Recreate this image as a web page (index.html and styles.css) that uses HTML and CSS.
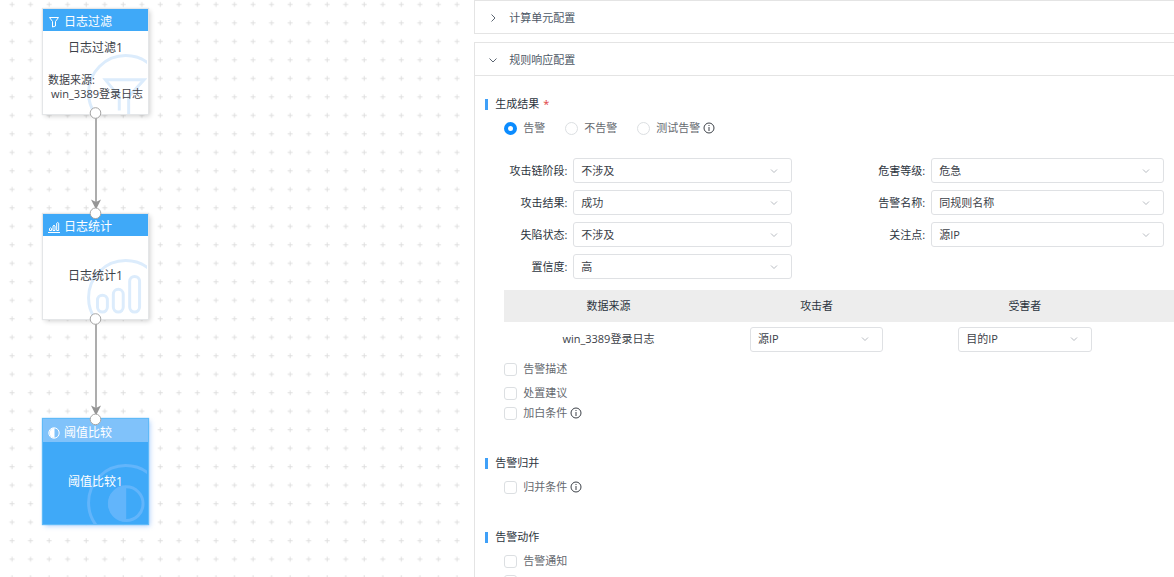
FILE: index.html
```html
<!DOCTYPE html>
<html lang="zh-CN">
<head>
  <meta charset="UTF-8" />
  <meta name="viewport" content="width=device-width, initial-scale=1.0" />
  <title>规则响应配置</title>
  <link rel="stylesheet" href="styles.css">
</head>
<body>
  <!-- 流程画布 -->
  <div class="canvas">
    <svg class="canvas-grid" aria-hidden="true">
      <defs>
        <pattern id="cross" x="3" y="-5" width="18.54" height="18.49" patternUnits="userSpaceOnUse">
          <path d="M9 7v5M6.500 9.500h5" stroke="#dedede" stroke-width="1" />
        </pattern>
      </defs>
      <rect width="462" height="100%" fill="url(#cross)" />
    </svg>

    <div class="node node-filter">
      <svg class="node-mark" viewBox="0 0 105 105" aria-hidden="true">
        <circle cx="83.5" cy="84" r="37.5" />
        <path d="M77 102V88L63 71h39L86.500 88v18" />
      </svg>
      <div class="node-head">
        <svg class="node-icon" viewBox="0 0 12 12" aria-hidden="true"><path d="M1.500 1.500h9L7.500 5.500v4.500l-3 1V5.500z" /></svg>
        <span>日志过滤</span>
      </div>
      <div class="node-title">日志过滤1</div>
      <div class="node-source">数据来源:<br><span>win_3389登录日志</span></div>
    </div>

    <div class="node node-stat">
      <svg class="node-mark" viewBox="0 0 105 105" aria-hidden="true">
        <circle cx="83.5" cy="84" r="37.5" />
        <rect x="55" y="81.500" width="10" height="17" rx="5" />
        <rect x="71" y="75.500" width="10" height="23" rx="5" />
        <rect x="87.500" y="62.500" width="10" height="36" rx="5" />
      </svg>
      <div class="node-head">
        <svg class="node-icon" viewBox="0 0 12 12" aria-hidden="true"><path d="M0 11.500h12M1.500 9.500V7.500q1-1.500 2 0v2zM5 9.500V5q1-1.500 2 0v4.500zM8.700 9.500V2.200q1-1.500 2 0v7.300z" /></svg>
        <span>日志统计</span>
      </div>
      <div class="node-title">日志统计1</div>
    </div>

    <div class="node node-compare">
      <svg class="node-mark" viewBox="0 0 105 105" aria-hidden="true">
        <circle cx="83.5" cy="84" r="37.5" />
        <circle cx="84" cy="85" r="17" />
        <path class="half" d="M84 67a18 18 0 0 0 0 36z" />
      </svg>
      <div class="node-head">
        <svg class="node-icon" viewBox="0 0 12 12" aria-hidden="true"><circle cx="6" cy="6" r="5.200" /><path class="half" d="M6.500 1a5 5 0 0 0 0 10z" /></svg>
        <span>阈值比较</span>
      </div>
      <div class="node-title">阈值比较1</div>
    </div>

    <svg class="links" width="160" height="440" aria-hidden="true">
      <path class="line" d="M96 113v90M96 319v90" />
      <path class="arrow" d="M91 199.500l5 2.500 5-2.500-5 10zM91 405.500l5 2.500 5-2.500-5 10z" />
      <circle cx="95.500" cy="113" r="5.300" />
      <circle cx="95.500" cy="213.300" r="5.300" />
      <circle cx="95.500" cy="319" r="5.300" />
      <circle cx="95.500" cy="419.400" r="5.300" />
    </svg>
  </div>

  <!-- 配置面板 -->
  <main class="config">
    <section class="panel">
      <button type="button" class="panel-head" aria-expanded="false">
        <svg viewBox="0 0 10 10" aria-hidden="true"><path d="M3.500 1.500L7 5 3.500 8.500" /></svg>
        计算单元配置
      </button>
    </section>

    <section class="panel panel-open">
      <button type="button" class="panel-head" aria-expanded="true">
        <svg viewBox="0 0 10 10" aria-hidden="true"><path d="M1.500 3.500L5 7l3.500-3.500" /></svg>
        规则响应配置
      </button>

      <div class="panel-body">
        <h2 class="section-title">生成结果<span class="required">*</span></h2>
        <div class="radios">
          <label><input type="radio" name="result" checked>告警</label>
          <label><input type="radio" name="result">不告警</label>
          <label><input type="radio" name="result">测试告警</label>
          <svg class="info" viewBox="0 0 12 12" aria-hidden="true"><circle cx="6" cy="6" r="5" /><path d="M6 5v4M6 3v1" /></svg>
        </div>

        <div class="form">
          <label for="stage">攻击链阶段:</label>
          <select id="stage"><option>不涉及</option></select>
          <label for="level">危害等级:</label>
          <select id="level"><option>危急</option></select>

          <label for="outcome">攻击结果:</label>
          <select id="outcome"><option>成功</option></select>
          <label for="name">告警名称:</label>
          <select id="name"><option>同规则名称</option></select>

          <label for="state">失陷状态:</label>
          <select id="state"><option>不涉及</option></select>
          <label for="focus">关注点:</label>
          <select id="focus"><option>源IP</option></select>

          <label for="trust">置信度:</label>
          <select id="trust"><option>高</option></select>
        </div>

        <table class="sources">
          <thead>
            <tr><th>数据来源</th><th>攻击者</th><th>受害者</th><th class="rest"></th></tr>
          </thead>
          <tbody>
            <tr>
              <td>win_3389登录日志</td>
              <td><select aria-label="攻击者"><option>源IP</option></select></td>
              <td><select aria-label="受害者"><option>目的IP</option></select></td>
              <td></td>
            </tr>
          </tbody>
        </table>

        <div class="checks">
          <label class="spaced"><input type="checkbox">告警描述</label>
          <label><input type="checkbox">处置建议</label>
          <div class="check-row">
            <label><input type="checkbox">加白条件</label>
            <svg class="info" viewBox="0 0 12 12" aria-hidden="true"><circle cx="6" cy="6" r="5" /><path d="M6 5v4M6 3v1" /></svg>
          </div>
        </div>

        <h2 class="section-title">告警归并</h2>
        <div class="checks">
          <div class="check-row">
            <label><input type="checkbox">归并条件</label>
            <svg class="info" viewBox="0 0 12 12" aria-hidden="true"><circle cx="6" cy="6" r="5" /><path d="M6 5v4M6 3v1" /></svg>
          </div>
        </div>

        <h2 class="section-title">告警动作</h2>
        <div class="checks">
          <label><input type="checkbox">告警通知</label>
          <label><input type="checkbox" aria-label="告警动作"></label>
        </div>
      </div>
    </section>
  </main>
</body>
</html>
```

FILE: styles.css
```css
* {
  box-sizing: border-box;
}
body {
  display: flex;
  height: 100vh;
  margin: 0;
  overflow: hidden;
  background: #fff;
  color: #3c4148;
  font-family: "Open Sans", "Noto Sans CJK SC", sans-serif;
  font-size: 11px;
  line-height: 16px;
}
button,
select {
  font: inherit;
  color: inherit;
}

/* 画布 */
.canvas {
  position: relative;
  flex: none;
  width: 40.4%;
  overflow: hidden;
}
.canvas-grid {
  display: block;
  width: 100%;
  height: 100%;
}
.node {
  position: absolute;
  left: 43px;
  width: 105px;
  height: 105px;
  background: #fff;
  box-shadow: 0 0 1px 1px #e4e6e8, 2px 2px 5px rgba(0, 0, 0, 0.2);
  overflow: hidden;
}
.node-filter { top: 9px; }
.node-stat { top: 214px; }
.node-compare {
  top: 419px;
  background: #3fa9f8;
  color: #fff;
  box-shadow: 0 0 1px 1px #5fbaf8, 2px 2px 5px rgba(63, 140, 248, 0.4);
}
.node-mark {
  position: absolute;
  top: 0;
  left: 0;
  width: 104px;
  height: 105px;
  fill: none;
  stroke: #dcecfc;
  stroke-width: 3;
}
.node-compare .node-mark { stroke: #62b5fb; }
.node-compare .node-mark .half {
  fill: #62b5fb;
  stroke: none;
}
.node-head {
  position: relative;
  display: flex;
  align-items: center;
  gap: 4px;
  height: 22px;
  padding: 4px 5px 0;
  background: #3fa9f8;
  color: #fff;
  font-size: 12px;
}
.node-compare .node-head {
  height: 23px;
  background: #80c2fa;
}
.node-icon {
  width: 12px;
  height: 12px;
  fill: none;
  stroke: #fff;
}
.node-icon .half {
  fill: #fff;
  stroke: none;
}
.node-title {
  position: relative;
  padding-top: 32px;
  font-size: 12px;
  text-align: center;
}
.node-filter .node-title { padding-top: 9px; }
.node-source {
  position: relative;
  padding: 17px 0 0 5px;
  line-height: 14px;
  white-space: nowrap;
}
.node-source span { padding-left: 3px; }
.links {
  position: absolute;
  top: 0;
  left: 0;
}
.links .line {
  stroke: #adadad;
  stroke-width: 2;
}
.links .arrow { fill: #959595; }
.links circle {
  fill: #fff;
  stroke: #a6a6a6;
}

/* 折叠面板 */
.config {
  display: flex;
  flex: 1;
  flex-direction: column;
  gap: 8px;
  min-width: 0;
}
.panel {
  flex: none;
  border: solid #e4e4e4;
  border-width: 1px 0 1px 1px;
}
.panel-head {
  display: flex;
  align-items: center;
  gap: 11px;
  width: 100%;
  height: 32px;
  padding: 2px 13px 0;
  border: 0;
  background: none;
  color: #4d5866;
  text-align: left;
}
.panel-head svg {
  width: 10px;
  height: 10px;
  fill: none;
  stroke: #5c6672;
}
.panel-open .panel-head {
  height: 33px;
  border-bottom: 1px solid #e4e4e4;
}
.panel-body {
  padding: 18px 0 0 29px;
}
.section-title {
  display: flex;
  align-items: center;
  height: 20px;
  margin: 30px 0 4px -19px;
  color: #2c3440;
  font-size: 11px;
  font-weight: 400;
}
.section-title:first-child { margin: 0 0 0 -19px; }
.section-title::before {
  content: "";
  width: 3px;
  height: 11px;
  margin-right: 7px;
  background: #3fa0f8;
}
.required {
  padding-left: 4px;
  color: #e03c3c;
}

/* 单选与复选 */
.radios {
  display: flex;
  align-items: center;
  height: 28px;
}
.radios label { margin-right: 20px; }
.radios label:last-of-type { margin-right: 3px; }
.radios label,
.checks label {
  display: flex;
  align-items: center;
  gap: 6px;
  color: #666a70;
}
input {
  appearance: none;
  flex: none;
  width: 13px;
  height: 13px;
  margin: 0;
  border: 1px solid #dcdfe2;
  border-radius: 3px;
  background: #fff;
}
input[type="radio"] { border-radius: 50%; }
input[type="radio"]:checked { border: 4px solid #0b8cff; }
.info {
  flex: none;
  width: 12px;
  height: 12px;
  fill: none;
  stroke: #3c4148;
}
.checks label { height: 20px; }
.checks .spaced { margin-bottom: 4px; }
.check-row {
  display: flex;
  align-items: center;
  gap: 3px;
}
.sources + .checks { padding-top: 3px; }

/* 表单 */
.form {
  display: grid;
  grid-template-columns: 63px 219fr 127px 233fr;
  gap: 7px 6px;
  align-items: center;
  padding: 16px 10px 0 0;
}
.form label {
  color: #2c3440;
  text-align: right;
  white-space: nowrap;
}
select {
  appearance: none;
  width: 100%;
  height: 25px;
  padding: 0 24px 0 7px;
  border: 1px solid #dfe1e4;
  border-radius: 3px;
  background: #fff url("data:image/svg+xml,%3Csvg xmlns='http://www.w3.org/2000/svg' width='8' height='8'%3E%3Cpath d='M1 2.500l3 3 3-3' fill='none' stroke='%23b8bcc2'/%3E%3C/svg%3E") no-repeat right 13px center;
}

/* 数据来源表 */
.sources {
  width: 100%;
  margin-top: 11px;
  border-collapse: collapse;
  table-layout: fixed;
  text-align: center;
}
.sources th {
  height: 32px;
  padding: 0;
  background: #ededed;
  color: #2c3440;
  font-weight: 400;
}
.sources .rest { width: 45px; }
.sources td {
  height: 34px;
  padding: 0;
}
.sources select {
  display: block;
  width: 64%;
  margin: 0 auto;
}
```
